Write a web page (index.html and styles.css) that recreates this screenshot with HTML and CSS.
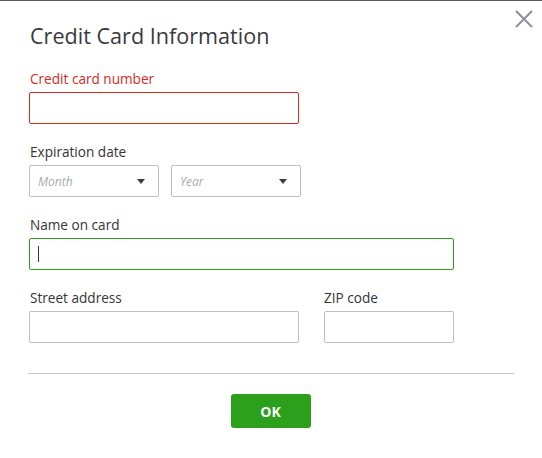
FILE: index.html
```html
<!DOCTYPE html>
<html>
<head>
<meta charset="utf-8">
<link rel="stylesheet" href="styles.css">
</head>
<body>
<div class="dialog">
  <button class="close" aria-label="Close">
    <svg width="18" height="18" viewBox="0 0 18 18"><path d="M1 1L17 17M17 1L1 17" stroke="#8d9096" stroke-width="2" fill="none"/></svg>
  </button>
  <h1 class="title">Credit Card Information</h1>
  <div class="field">
    <label class="label error">Credit card number</label>
    <div class="input input-error"></div>
  </div>
  <div class="field">
    <label class="label">Expiration date</label>
    <div class="row">
      <div class="input select"><span class="ph">Month</span><span class="caret-down"></span></div>
      <div class="input select"><span class="ph">Year</span><span class="caret-down"></span></div>
    </div>
  </div>
  <div class="field">
    <label class="label">Name on card</label>
    <div class="input input-focus wide"><span class="cursor"></span></div>
  </div>
  <div class="row addr">
    <div class="col">
      <label class="label">Street address</label>
      <div class="input street"></div>
    </div>
    <div class="col">
      <label class="label flush">ZIP code</label>
      <div class="input zip"></div>
    </div>
  </div>
  <hr class="divider">
  <div class="actions">
    <button class="ok">OK</button>
  </div>
</div>
</body>
</html>
```
FILE: styles.css
```css
html, body {
  margin: 0;
  padding: 0;
  background: #fff;
}
body {
  border-top: 1px solid #5a5a5a;
  font-family: "Open Sans", "Lato", sans-serif;
  color: #393a3d;
}
.dialog {
  position: relative;
  padding: 0 28px 0 29px;
}
.close {
  position: absolute;
  top: 9px;
  right: 9px;
  background: none;
  border: 0;
  padding: 0;
  width: 18px;
  height: 18px;
  display: block;
}
.title {
  margin: 0;
  padding-top: 19px;
  font-size: 21.6px;
  font-weight: 500;
  line-height: 32px;
  padding-left: 1px;
}
.field, .col {
  display: flex;
  flex-direction: column;
}
.title + .field { margin-top: 18px; }
.field + .field { margin-top: 19px; }
.label {
  font-size: 13.6px;
  font-weight: 500;
  line-height: 18px;
  padding-left: 1px;
  margin-bottom: 4px;
  color: #333436;
}
.label.flush { padding-left: 0; }
.label.error { color: #d52b1e; }
.input {
  box-sizing: border-box;
  height: 32px;
  width: 270px;
  border: 1px solid #babec5;
  border-radius: 2px;
}
.input-error { border-color: #d52b1e; }
.input-focus { border-color: #2ca01c; }
.wide { width: 425px; display: flex; align-items: center; padding-left: 8px; }
.cursor { width: 1px; height: 16px; background: #393a3d; }
.row { display: flex; gap: 12px; }
.select {
  width: 130px;
  display: flex;
  align-items: center;
  justify-content: space-between;
  padding: 0 13px 0 8px;
}
.ph {
  font-style: italic;
  font-size: 12px;
  color: #a8acb2;
}
.caret-down {
  width: 0;
  height: 0;
  border-left: 4px solid transparent;
  border-right: 4px solid transparent;
  border-top: 5px solid #393a3d;
}
.addr { gap: 25px; margin-top: 19px; }
.street { width: 270px; }
.zip { width: 130px; }
.divider {
  border: 0;
  border-top: 1px solid #c8c8c8;
  margin: 30px 0 0 -1px;
  width: 486px;
}
.actions {
  display: flex;
  justify-content: center;
  padding-top: 20px;
  padding-right: 2px;
}
.ok {
  width: 80px;
  height: 34px;
  border: 0;
  border-radius: 3px;
  background: #2ca01c;
  color: #fff;
  font-family: "Open Sans", sans-serif;
  font-weight: 700;
  font-size: 14px;
}
```
